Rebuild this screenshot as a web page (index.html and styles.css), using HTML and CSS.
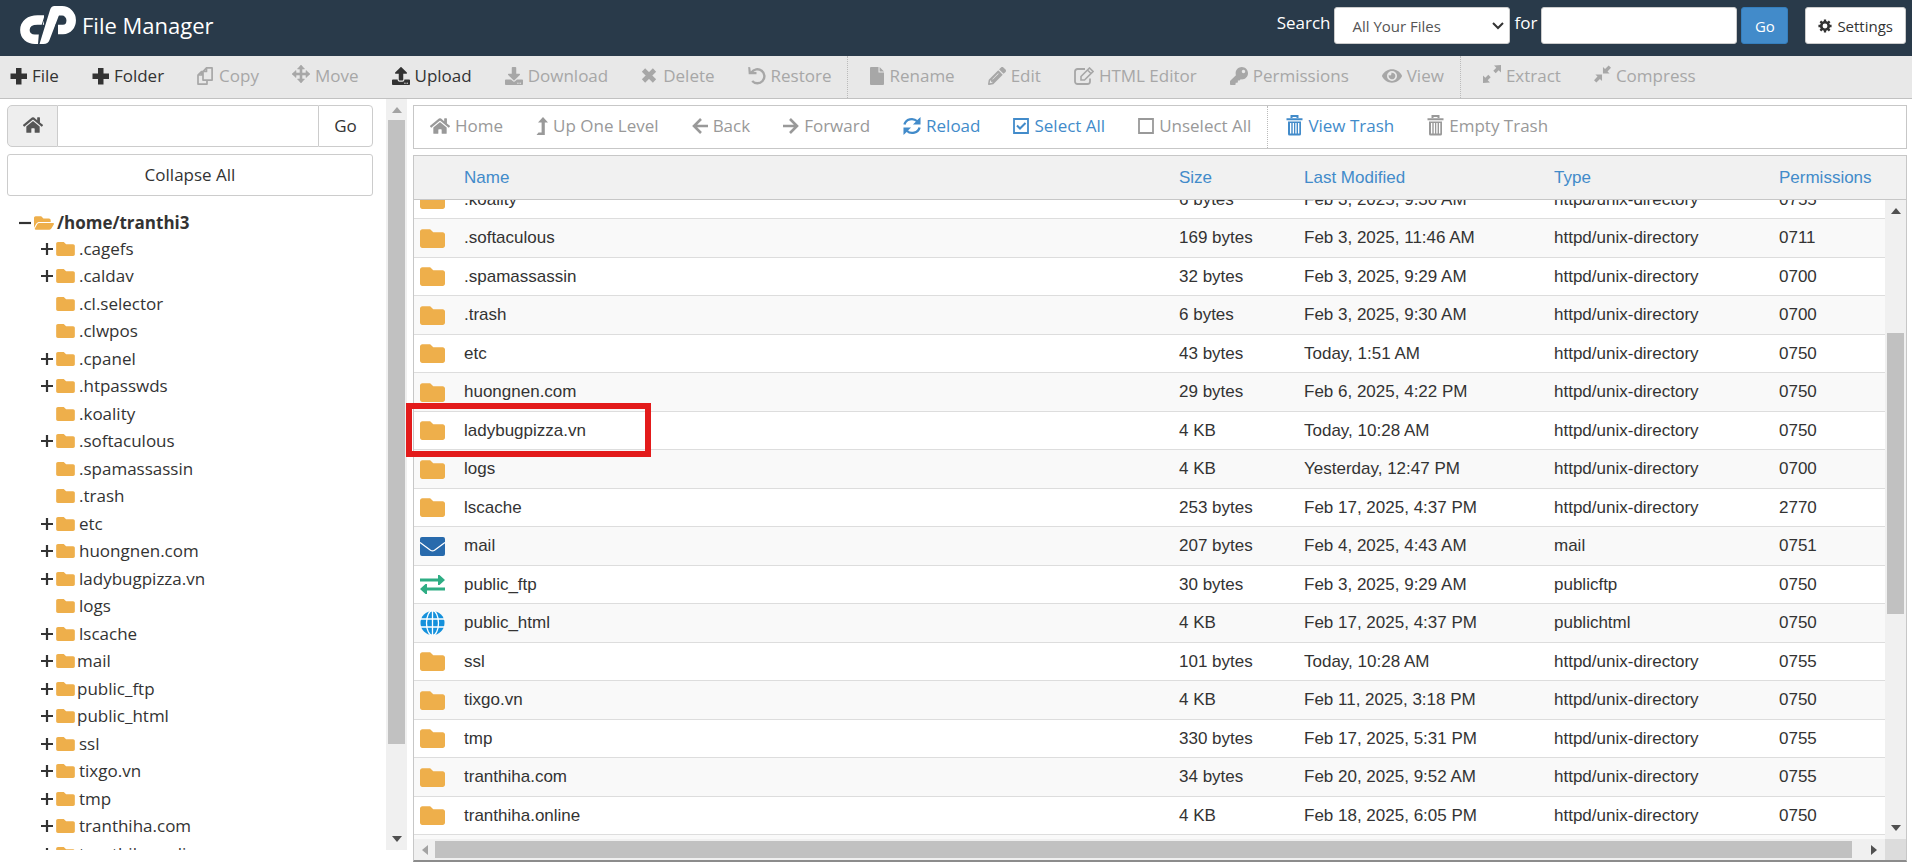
FILE: index.html
```html
<!DOCTYPE html>
<html lang="en">
<head>
<meta charset="utf-8">
<title>File Manager</title>
<link rel="stylesheet" href="styles.css">
</head>
<body>
<svg class="sprite" aria-hidden="true">
  <symbol id="plus" viewBox="0 0 17 17"><path d="M6 .5h5.500v5.500H17v5.500h-5.500V17H6v-5.500H.5V6H6z"/></symbol>
  <symbol id="copy" viewBox="0 0 17 18"><g fill="none" stroke="currentColor" stroke-width="1.700" stroke-linejoin="round"><path d="M9.500.9H15.100V13.100H6V4.500zM9.500 1V4.500H6M6 4.500H4.500L1 8V17.100H10V13.500M4.500 4.500V8H1"/></g></symbol>
  <symbol id="move" viewBox="0 0 18 18"><path d="M9 0l3.500 4H10v4h4V5.500L18 9l-4 3.500V10h-4v4h2.500L9 18l-3.500-4H8v-4H4v2.500L0 9l4-3.500V8h4V4H5.500z" stroke="currentColor" stroke-width=".6"/></symbol>
  <symbol id="upload" viewBox="0 0 512 512"><path d="M296 384h-80c-13.300 0-24-10.700-24-24V192h-87.700c-17.800 0-26.700-21.500-14.100-34.100L242.300 5.700c7.500-7.500 19.800-7.500 27.300 0l152.200 152.200c12.600 12.600 3.700 34.100-14.100 34.100H320v168c0 13.300-10.700 24-24 24zm216-8v112c0 13.300-10.700 24-24 24H24c-13.300 0-24-10.700-24-24V376c0-13.300 10.700-24 24-24h136v8c0 30.900 25.100 56 56 56h80c30.900 0 56-25.100 56-56v-8h136c13.300 0 24 10.700 24 24zm-124 88c0-11-9-20-20-20s-20 9-20 20 9 20 20 20 20-9 20-20zm64 0c0-11-9-20-20-20s-20 9-20 20 9 20 20 20 20-9 20-20z"/></symbol>
  <symbol id="download" viewBox="0 0 512 512"><path d="M216 0h80c13.300 0 24 10.700 24 24v168h87.700c17.800 0 26.700 21.500 14.100 34.100L269.700 378.300c-7.500 7.500-19.800 7.500-27.300 0L90.100 226.100c-12.600-12.600-3.700-34.100 14.100-34.100H192V24c0-13.300 10.700-24 24-24zm296 376v112c0 13.300-10.700 24-24 24H24c-13.300 0-24-10.700-24-24V376c0-13.300 10.700-24 24-24h146.700l49 49c20.100 20.100 52.500 20.100 72.600 0l49-49H488c13.300 0 24 10.700 24 24zm-124 88c0-11-9-20-20-20s-20 9-20 20 9 20 20 20 20-9 20-20zm64 0c0-11-9-20-20-20s-20 9-20 20 9 20 20 20 20-9 20-20z"/></symbol>
  <symbol id="times" viewBox="0 0 17 17"><path d="M2.500 2.500l11 11M13.500 2.500L2.500 13.500" stroke="currentColor" stroke-width="4.600"/></symbol>
  <symbol id="undo" viewBox="0 0 18 18"><path d="M3.500 5.500A7 7 0 1 1 4.200 14" fill="none" stroke="currentColor" stroke-width="2.400"/><path d="M.2 0l2 .3.6 4.200 5.700.5v2.300H.7z"/></symbol>
  <symbol id="file" viewBox="0 0 14 18"><path d="M1 0h7.500v5.500H14V17a1 1 0 0 1-1 1H1a1 1 0 0 1-1-1V1a1 1 0 0 1 1-1zM9.600 0L14 4.400H9.600z"/></symbol>
  <symbol id="pencil" viewBox="0 0 512 512"><path fill-rule="evenodd" d="M497.900 142.100l-46.100 46.100c-4.700 4.700-12.300 4.700-17 0l-111-111c-4.700-4.700-4.700-12.300 0-17l46.100-46.100c18.700-18.700 49.100-18.700 67.900 0l60.100 60.100c18.800 18.700 18.800 49.100 0 67.900zM284.200 99.800L21.600 362.400.4 483.900c-2.900 16.400 11.400 30.600 27.800 27.800l121.500-21.300 262.600-262.600c4.700-4.700 4.700-12.300 0-17l-111-111c-4.800-4.700-12.400-4.700-17.100 0zM88 424v-48l-28 14-12 70 70-12 14-28zM120 345l168-168 16 14-168 168z"/></symbol>
  <symbol id="editor" viewBox="0 0 20 18"><path d="M11 2H3.500A2.500 2.500 0 0 0 1 4.500v10A2.500 2.500 0 0 0 3.500 17h10a2.500 2.500 0 0 0 2.500-2.500V11.500" fill="none" stroke="currentColor" stroke-width="1.800"/><path d="M7 9.500L15.500 1l3.500 3.500-8.500 8.500H7zM13.500 3l3.500 3.500" fill="none" stroke="currentColor" stroke-width="1.600"/></symbol>
  <symbol id="key" viewBox="0 0 512 512"><path d="M512 176C512 273.200 433.200 352 336 352c-11.200 0-22.200-1-32.800-3l-24 27a24 24 0 0 1-18 8H224v40c0 13.300-10.700 24-24 24h-40v40c0 13.300-10.700 24-24 24H24c-13.300 0-24-10.700-24-24v-78c0-6.400 2.500-12.500 7-17l161.800-161.800C163.100 213.800 160 195.300 160 176 160 78.800 238.800 0 336 0c97.500 0 176 78.500 176 176zM336 128c0 26.500 21.500 48 48 48s48-21.500 48-48-21.500-48-48-48-48 21.500-48 48z"/></symbol>
  <symbol id="eye" viewBox="0 0 576 512"><path d="M572.500 241.400C518.300 135.600 410.900 64 288 64S57.700 135.600 3.500 241.400a32.400 32.400 0 0 0 0 29.200C57.700 376.400 165.100 448 288 448s230.300-71.600 284.500-177.400a32.400 32.400 0 0 0 0-29.200zM288 400a144 144 0 1 1 144-144 143.900 143.900 0 0 1-144 144zm0-240a95.300 95.300 0 0 0-25.300 3.800 47.900 47.900 0 0 1-66.900 66.900A95.800 95.800 0 1 0 288 160z"/></symbol>
  <symbol id="expand" viewBox="0 0 18 18"><path d="M18 0v7.500l-2.300-2.300-3 3-2.400-2.400 3-3L11 .5zM0 18v-7.500l2.300 2.300 3-3 2.400 2.400-3 3L7 17.500z"/></symbol>
  <symbol id="compress" viewBox="0 0 18 18"><path d="M9.500 8.500V1.500l2.200 2.200L15.500 0 18 2.500l-3.700 3.800 2.200 2.200zM8.500 9.500v7l-2.200-2.200L2.500 18 0 15.500l3.700-3.800-2.200-2.200z"/></symbol>
  <symbol id="home" viewBox="0 0 576 512"><path d="M280.400 148.300L96 300.100V464a16 16 0 0 0 16 16l112-.3a16 16 0 0 0 16-16V368a16 16 0 0 1 16-16h64a16 16 0 0 1 16 16v95.600a16 16 0 0 0 16 16L464 480a16 16 0 0 0 16-16V300L295.700 148.300a12.200 12.200 0 0 0-15.300 0zM571.600 251.500L488 182.600V44a12 12 0 0 0-12-12h-56a12 12 0 0 0-12 12v72.600L318.500 43a48 48 0 0 0-61 0L4.300 251.500a12 12 0 0 0-1.600 16.900l25.500 31A12 12 0 0 0 45.200 301l235.200-193.700a12.200 12.200 0 0 1 15.300 0L530.900 301a12 12 0 0 0 16.900-1.600l25.500-31a12 12 0 0 0-1.700-16.900z"/></symbol>
  <symbol id="up" viewBox="0 0 12 18"><path d="M7 0l5 5.500H8.800V18H.5l2-2.600H5.600V5.500H2z"/></symbol>
  <symbol id="back" viewBox="0 0 16 18"><path d="M9 2L2 9l7 7M2 9h14" fill="none" stroke="currentColor" stroke-width="2.600"/></symbol>
  <symbol id="forward" viewBox="0 0 16 18"><path d="M7 2l7 7-7 7M14 9H0" fill="none" stroke="currentColor" stroke-width="2.600"/></symbol>
  <symbol id="reload" viewBox="0 0 19 19"><path d="M1.500 8A8 7.500 0 0 1 15 4.500M17.500 11A8 7.500 0 0 1 4 14.500" fill="none" stroke="currentColor" stroke-width="2.500"/><path d="M18.500 0v8h-8l2.700-2.700 2.500-2.600zM.5 19v-8h8l-2.700 2.700-2.500 2.600z"/></symbol>
  <symbol id="checked" viewBox="0 0 16 18"><path d="M1 2h14v14H1z" fill="none" stroke="currentColor" stroke-width="1.800"/><path d="M4 8.500l3 3L12.500 6" fill="none" stroke="currentColor" stroke-width="2"/></symbol>
  <symbol id="box" viewBox="0 0 16 18"><path d="M1 2h14v14H1z" fill="none" stroke="currentColor" stroke-width="1.800"/></symbol>
  <symbol id="trash" viewBox="0 0 17 21"><path d="M5.500 3V1h6v2M.5 4.200h16" fill="none" stroke="currentColor" stroke-width="2"/><path fill-rule="evenodd" d="M2 6.500h13V19a1.500 1.500 0 0 1-1.500 1.500h-10A1.500 1.500 0 0 1 2 19zM4 8v10.500h1.300V8zm2.700 0v10.500H8V8zM9.300 8v10.500h1.300V8zM12 8v10.500h1.300V8z"/></symbol>
  <symbol id="cog" viewBox="0 0 16 16"><circle cx="8" cy="8" r="4.300" fill="none" stroke="currentColor" stroke-width="3"/><path d="M8 .5v3M8 12.500v3M.5 8h3M12.500 8h3M2.700 2.700l2 2M11.300 11.300l2 2M2.700 13.300l2-2M11.300 4.700l2-2" stroke="currentColor" stroke-width="2.600"/></symbol>
  <symbol id="folder" viewBox="0 64 512 384"><path d="M464 128H272l-64-64H48C21.500 64 0 85.500 0 112v288c0 26.500 21.500 48 48 48h416c26.500 0 48-21.500 48-48V176c0-26.500-21.500-48-48-48z"/></symbol>
  <symbol id="open" viewBox="0 64 576 384"><path d="M572.700 292.100L500.300 416.200A64 64 0 0 1 445 448H45c-18.500 0-30-20.100-20.700-36.100l72.400-124.200A64 64 0 0 1 152 256h400c18.500 0 30 20.100 20.700 36.100zM152 224h328v-48c0-26.500-21.500-48-48-48H272l-64-64H48C21.500 64 0 85.500 0 112v278l69-118.400C86.200 242.300 118 224 152 224z"/></symbol>
  <symbol id="mail" viewBox="0 0 25 19"><rect width="25" height="19" rx="2"/><path d="M0 5.500l10.500 7.700q2 1.300 4 0L25 5.500" fill="none" stroke="#fff" stroke-width="1.300"/></symbol>
  <symbol id="swap" viewBox="0 0 25 19"><path d="M0 3.500h18V0h1.500L25 5l-5.500 5H18V6.500H0zM25 12.500H7V9H5.500L0 14l5.500 5H7v-3.500h18z"/></symbol>
  <symbol id="globe" viewBox="0 0 24 24"><circle cx="12" cy="12" r="12"/><path d="M0 8h24M0 16h24M12 0v24" fill="none" stroke="#fff" stroke-width="1.300"/><ellipse cx="12" cy="12" rx="6" ry="12.500" fill="none" stroke="#fff" stroke-width="1.300"/></symbol>
  <symbol id="tri-up" viewBox="0 0 10 6"><path d="M5 0l5 6H0z"/></symbol>
  <symbol id="tri-down" viewBox="0 0 10 6"><path d="M5 6L0 0h10z"/></symbol>
  <symbol id="tri-left" viewBox="0 0 6 10"><path d="M0 5l6-5v10z"/></symbol>
  <symbol id="tri-right" viewBox="0 0 6 10"><path d="M6 5L0 0v10z"/></symbol>
  <symbol id="expander" viewBox="0 0 12 12"><path d="M6 0v12M0 6h12" stroke="currentColor" stroke-width="2.200"/></symbol>
  <symbol id="collapser" viewBox="0 0 12 12"><path d="M0 6h12" stroke="currentColor" stroke-width="2.200"/></symbol>
</svg>

<header class="header">
  <svg class="logo" viewBox="0 0 56 38" role="img" aria-label="cPanel"><g fill="none" stroke="#fff" stroke-width="9.500"><path d="M24 14H17.500C10 14 4.900 18 4.900 24s4.600 9.200 10 9.200H19"/><path d="M38 23.500h5c5 0 8.200-4.200 8.200-9.300S47 4.800 42 4.800H34"/></g><path d="M33.500 0h9L29.500 34q-1.300 4-6 4H19.500L30 4q1.200-4 4.500-4z" fill="#fff"/><path d="M25.500 8L19.300 28.500 18.500 38M33.500 28.500L36.500 17.500" fill="none" stroke="#293a4a" stroke-width="1"/></svg>
  <h1 class="title">File Manager</h1>
  <form class="search">
    <label for="scope">Search</label>
    <span class="scope-wrap"><select id="scope" class="control scope"><option>All Your Files</option></select><svg class="chevron" viewBox="0 0 12 8"><path d="M1 1l5 5 5-5" fill="none" stroke="#333" stroke-width="2"/></svg></span>
    <label for="query">for</label>
    <input id="query" class="control query" type="text">
    <button class="control go" type="button">Go</button>
    <button class="control settings" type="button"><svg class="i14"><use href="#cog"/></svg>Settings</button>
  </form>
</header>

<nav class="toolbar" aria-label="Actions">
  <button class="tool on"><svg class="i17"><use href="#plus"/></svg>File</button>
  <button class="tool on"><svg class="i17"><use href="#plus"/></svg>Folder</button>
  <button class="tool"><svg class="i17"><use href="#copy"/></svg>Copy</button>
  <button class="tool"><svg class="i18 raised"><use href="#move"/></svg>Move</button>
  <button class="tool on"><svg class="i18"><use href="#upload"/></svg>Upload</button>
  <button class="tool"><svg class="i18"><use href="#download"/></svg>Download</button>
  <button class="tool"><svg class="i17"><use href="#times"/></svg>Delete</button>
  <button class="tool"><svg class="i18"><use href="#undo"/></svg>Restore</button>
  <span class="sep"></span>
  <button class="tool"><svg class="i14"><use href="#file"/></svg>Rename</button>
  <button class="tool"><svg class="i18"><use href="#pencil"/></svg>Edit</button>
  <button class="tool"><svg class="i20"><use href="#editor"/></svg>HTML Editor</button>
  <button class="tool"><svg class="i18"><use href="#key"/></svg>Permissions</button>
  <button class="tool"><svg class="i20"><use href="#eye"/></svg>View</button>
  <span class="sep"></span>
  <button class="tool"><svg class="i18 raised"><use href="#expand"/></svg>Extract</button>
  <button class="tool"><svg class="i17 raised"><use href="#compress"/></svg>Compress</button>
</nav>

<div class="workspace">
  <aside class="sidebar">
    <div class="side-content">
      <form class="path">
        <button class="path-home" type="button" aria-label="Home"><svg class="i20"><use href="#home"/></svg></button>
        <input class="path-input" type="text" aria-label="Path">
        <button class="path-go" type="button">Go</button>
      </form>
      <button class="collapse" type="button">Collapse All</button>
      <div class="root"><svg class="i12"><use href="#collapser"/></svg><svg class="f-open"><use href="#open"/></svg>/home/tranthi3</div>
      <ul class="tree">
        <li><svg class="i12"><use href="#expander"/></svg><svg class="f-small"><use href="#folder"/></svg>.cagefs</li>
        <li><svg class="i12"><use href="#expander"/></svg><svg class="f-small"><use href="#folder"/></svg>.caldav</li>
        <li class="leaf"><svg class="f-small"><use href="#folder"/></svg>.cl.selector</li>
        <li class="leaf"><svg class="f-small"><use href="#folder"/></svg>.clwpos</li>
        <li><svg class="i12"><use href="#expander"/></svg><svg class="f-small"><use href="#folder"/></svg>.cpanel</li>
        <li><svg class="i12"><use href="#expander"/></svg><svg class="f-small"><use href="#folder"/></svg>.htpasswds</li>
        <li class="leaf"><svg class="f-small"><use href="#folder"/></svg>.koality</li>
        <li><svg class="i12"><use href="#expander"/></svg><svg class="f-small"><use href="#folder"/></svg>.softaculous</li>
        <li class="leaf"><svg class="f-small"><use href="#folder"/></svg>.spamassassin</li>
        <li class="leaf"><svg class="f-small"><use href="#folder"/></svg>.trash</li>
        <li><svg class="i12"><use href="#expander"/></svg><svg class="f-small"><use href="#folder"/></svg>etc</li>
        <li><svg class="i12"><use href="#expander"/></svg><svg class="f-small"><use href="#folder"/></svg>huongnen.com</li>
        <li><svg class="i12"><use href="#expander"/></svg><svg class="f-small"><use href="#folder"/></svg>ladybugpizza.vn</li>
        <li class="leaf"><svg class="f-small"><use href="#folder"/></svg>logs</li>
        <li><svg class="i12"><use href="#expander"/></svg><svg class="f-small"><use href="#folder"/></svg>lscache</li>
        <li class="special"><svg class="i12"><use href="#expander"/></svg><svg class="f-small"><use href="#folder"/></svg>mail</li>
        <li class="special"><svg class="i12"><use href="#expander"/></svg><svg class="f-small"><use href="#folder"/></svg>public_ftp</li>
        <li class="special"><svg class="i12"><use href="#expander"/></svg><svg class="f-small"><use href="#folder"/></svg>public_html</li>
        <li><svg class="i12"><use href="#expander"/></svg><svg class="f-small"><use href="#folder"/></svg>ssl</li>
        <li><svg class="i12"><use href="#expander"/></svg><svg class="f-small"><use href="#folder"/></svg>tixgo.vn</li>
        <li><svg class="i12"><use href="#expander"/></svg><svg class="f-small"><use href="#folder"/></svg>tmp</li>
        <li><svg class="i12"><use href="#expander"/></svg><svg class="f-small"><use href="#folder"/></svg>tranthiha.com</li>
        <li><svg class="i12"><use href="#expander"/></svg><svg class="f-small"><use href="#folder"/></svg>tranthiha.online</li>
      </ul>
    </div>
    <div class="vbar side-bar">
      <svg class="arrow-v dim"><use href="#tri-up"/></svg>
      <div class="vtrack"><div class="vthumb side-thumb"></div></div>
      <svg class="arrow-v"><use href="#tri-down"/></svg>
    </div>
  </aside>

  <main class="main">
    <nav class="navbar" aria-label="Navigation">
      <button class="nav"><svg class="i20"><use href="#home"/></svg>Home</button>
      <button class="nav"><svg class="i12 tall"><use href="#up"/></svg>Up One Level</button>
      <button class="nav"><svg class="i16"><use href="#back"/></svg>Back</button>
      <button class="nav"><svg class="i16"><use href="#forward"/></svg>Forward</button>
      <button class="nav blue"><svg class="i18"><use href="#reload"/></svg>Reload</button>
      <button class="nav blue"><svg class="i16"><use href="#checked"/></svg>Select All</button>
      <button class="nav"><svg class="i16"><use href="#box"/></svg>Unselect All</button>
      <span class="sep"></span>
      <button class="nav blue first"><svg class="bin"><use href="#trash"/></svg>View Trash</button>
      <button class="nav"><svg class="bin"><use href="#trash"/></svg>Empty Trash</button>
    </nav>

    <section class="listing">
      <table class="files head">
        <colgroup><col class="c-icon"><col><col class="c-size"><col class="c-date"><col class="c-type"><col class="c-perm-head"></colgroup>
        <thead><tr><th></th><th>Name</th><th>Size</th><th>Last Modified</th><th>Type</th><th>Permissions</th></tr></thead>
      </table>
      <div class="list-area">
        <div class="rows">
          <table class="files body">
            <colgroup><col class="c-icon"><col><col class="c-size"><col class="c-date"><col class="c-type"><col class="c-perm"></colgroup>
            <tbody>
              <tr><td><svg class="f-big"><use href="#folder"/></svg></td><td>.koality</td><td>6 bytes</td><td>Feb 3, 2025, 9:30 AM</td><td>httpd/unix-directory</td><td>0755</td></tr>
              <tr><td><svg class="f-big"><use href="#folder"/></svg></td><td>.softaculous</td><td>169 bytes</td><td>Feb 3, 2025, 11:46 AM</td><td>httpd/unix-directory</td><td>0711</td></tr>
              <tr><td><svg class="f-big"><use href="#folder"/></svg></td><td>.spamassassin</td><td>32 bytes</td><td>Feb 3, 2025, 9:29 AM</td><td>httpd/unix-directory</td><td>0700</td></tr>
              <tr><td><svg class="f-big"><use href="#folder"/></svg></td><td>.trash</td><td>6 bytes</td><td>Feb 3, 2025, 9:30 AM</td><td>httpd/unix-directory</td><td>0700</td></tr>
              <tr><td><svg class="f-big"><use href="#folder"/></svg></td><td>etc</td><td>43 bytes</td><td>Today, 1:51 AM</td><td>httpd/unix-directory</td><td>0750</td></tr>
              <tr><td><svg class="f-big"><use href="#folder"/></svg></td><td>huongnen.com</td><td>29 bytes</td><td>Feb 6, 2025, 4:22 PM</td><td>httpd/unix-directory</td><td>0750</td></tr>
              <tr><td><svg class="f-big"><use href="#folder"/></svg></td><td>ladybugpizza.vn</td><td>4 KB</td><td>Today, 10:28 AM</td><td>httpd/unix-directory</td><td>0750</td></tr>
              <tr><td><svg class="f-big"><use href="#folder"/></svg></td><td>logs</td><td>4 KB</td><td>Yesterday, 12:47 PM</td><td>httpd/unix-directory</td><td>0700</td></tr>
              <tr><td><svg class="f-big"><use href="#folder"/></svg></td><td>lscache</td><td>253 bytes</td><td>Feb 17, 2025, 4:37 PM</td><td>httpd/unix-directory</td><td>2770</td></tr>
              <tr><td><svg class="f-big mail"><use href="#mail"/></svg></td><td>mail</td><td>207 bytes</td><td>Feb 4, 2025, 4:43 AM</td><td>mail</td><td>0751</td></tr>
              <tr><td><svg class="f-big ftp"><use href="#swap"/></svg></td><td>public_ftp</td><td>30 bytes</td><td>Feb 3, 2025, 9:29 AM</td><td>publicftp</td><td>0750</td></tr>
              <tr><td><svg class="f-big web"><use href="#globe"/></svg></td><td>public_html</td><td>4 KB</td><td>Feb 17, 2025, 4:37 PM</td><td>publichtml</td><td>0750</td></tr>
              <tr><td><svg class="f-big"><use href="#folder"/></svg></td><td>ssl</td><td>101 bytes</td><td>Today, 10:28 AM</td><td>httpd/unix-directory</td><td>0755</td></tr>
              <tr><td><svg class="f-big"><use href="#folder"/></svg></td><td>tixgo.vn</td><td>4 KB</td><td>Feb 11, 2025, 3:18 PM</td><td>httpd/unix-directory</td><td>0750</td></tr>
              <tr><td><svg class="f-big"><use href="#folder"/></svg></td><td>tmp</td><td>330 bytes</td><td>Feb 17, 2025, 5:31 PM</td><td>httpd/unix-directory</td><td>0755</td></tr>
              <tr><td><svg class="f-big"><use href="#folder"/></svg></td><td>tranthiha.com</td><td>34 bytes</td><td>Feb 20, 2025, 9:52 AM</td><td>httpd/unix-directory</td><td>0755</td></tr>
              <tr><td><svg class="f-big"><use href="#folder"/></svg></td><td>tranthiha.online</td><td>4 KB</td><td>Feb 18, 2025, 6:05 PM</td><td>httpd/unix-directory</td><td>0750</td></tr>
            </tbody>
          </table>
        </div>
        <div class="vbar">
          <svg class="arrow-v"><use href="#tri-up"/></svg>
          <div class="vtrack"><div class="vthumb list-thumb"></div></div>
          <svg class="arrow-v"><use href="#tri-down"/></svg>
        </div>
      </div>
      <div class="hrow">
        <div class="hbar">
          <svg class="arrow-h dim"><use href="#tri-left"/></svg>
          <div class="hthumb"></div>
          <svg class="arrow-h"><use href="#tri-right"/></svg>
        </div>
        <div class="corner"></div>
      </div>
    </section>
    <div class="highlight"></div>
  </main>
</div>
</body>
</html>
```
FILE: styles.css
```css
* { box-sizing: border-box; }

body {
  margin: 0;
  height: 100vh;
  display: flex;
  flex-direction: column;
  overflow: hidden;
  background: #fff;
  color: #333;
  font: 17px/24px "Open Sans", "Noto Sans", sans-serif;
}

.sprite { display: none; }

svg { fill: currentColor; flex: none; }

button, input, select { font: inherit; color: inherit; margin: 0; }

button { white-space: nowrap; cursor: pointer; }

.i12 { width: 12px; height: 12px; }
.i12.tall { height: 18px; }
.i14 { width: 14px; height: 18px; }
.i16 { width: 16px; height: 18px; }
.i17 { width: 17px; height: 18px; }
.i18 { width: 18px; height: 18px; }
.i20 { width: 20px; height: 18px; }
.bin { width: 17px; height: 21px; margin-bottom: 2px; }
.raised { margin-bottom: 4px; }

/* Header */
.header {
  flex: none;
  display: flex;
  align-items: flex-start;
  height: 56px;
  padding: 6px 6px 0 20px;
  background: #293a4a;
  color: #fff;
}
.logo { width: 56px; height: 38px; }
.title { margin: 4px 0 0 6px; font-size: 22px; line-height: 30px; font-weight: 400; }
.search { display: flex; margin: 1px 0 0 auto; gap: 4px; line-height: 32px; }
.control {
  height: 37px;
  border: 1px solid #ccc;
  border-radius: 3px;
  background: #fff;
  color: #333;
  font-size: 15px;
}
.scope-wrap { position: relative; display: flex; }
.scope { width: 176px; padding: 0 17px; appearance: none; color: #555; }
.chevron { position: absolute; right: 6px; top: 15px; width: 12px; height: 8px; }
.query { width: 196px; }
.go { width: 47px; padding: 0; background: #428bca; border-color: #357ebd; color: #fff; }
.settings {
  display: flex;
  align-items: center;
  gap: 5px;
  margin-left: 13px;
  padding: 0 12px;
}

/* Action toolbar */
.toolbar {
  flex: none;
  display: flex;
  height: 43px;
  padding-left: 10px;
  background: #e8e8e8;
  border-bottom: 1px solid #c1c1c1;
}
.tool, .nav {
  display: flex;
  align-items: center;
  gap: 5px;
  padding: 0 0 2px;
  margin-right: 33px;
  border: 0;
  background: none;
  color: #a7a7a7;
}
.tool.on { color: #333; }
.sep { width: 1px; margin: 0 22px 0 -17px; border-left: 1px dotted #bbb; }

/* Workspace */
.workspace { flex: 1; display: flex; min-height: 0; }

.sidebar { flex: none; display: flex; width: 407px; margin-bottom: 12px; overflow: hidden; }
.side-content { flex: 1; padding: 6px 13px 0 7px; }
.path { display: flex; height: 42px; }
.path-home, .path-input, .path-go { border: 1px solid #ccc; background: #fff; }
.path-home {
  width: 51px;
  display: flex;
  align-items: center;
  justify-content: center;
  padding: 0 0 2px;
  background: #eee;
  color: #555;
  border-radius: 5px 0 0 5px;
}
.path-input { flex: 1; min-width: 0; border-width: 1px 0; }
.path-go { width: 55px; padding: 0; border-left-color: #ccc; border-radius: 0 4px 4px 0; }
.collapse {
  width: 100%;
  height: 42px;
  margin: 7px 0 14px;
  padding: 0;
  border: 1px solid #ccc;
  border-radius: 3px;
  background: #fff;
}
.root { display: flex; align-items: center; height: 25px; padding-left: 12px; font-weight: 700; }
.f-open { width: 20px; height: 14px; margin: 0 3px; color: #eeaf4b; }
.tree { list-style: none; margin: 0; padding: 0 0 0 34px; }
.tree li { display: flex; align-items: center; height: 27px; }
.tree li:nth-child(even) { height: 28px; }
.tree .leaf { padding-left: 12px; }
.f-small { width: 19px; height: 14px; margin: 0 4px 0 3px; color: #eeaf4b; }
.special .f-small { margin-right: 2px; }

/* Scroll bars */
.vbar {
  flex: none;
  display: flex;
  flex-direction: column;
  align-items: center;
  width: 21px;
  padding: 8px 0;
  background: #f0f0f0;
  color: #505050;
}
.arrow-v { width: 10px; height: 6px; }
.dim { color: #a3a3a3; }
.vtrack { flex: 1; width: 17px; margin: 7px 0; }
.vthumb { background: #c1c1c1; }
.side-thumb { height: 88%; }
.list-thumb { height: 47%; margin-top: 112px; }

/* Listing */
.main {
  position: relative;
  flex: 1;
  min-width: 0;
  display: flex;
  flex-direction: column;
  margin: 6px 5px 0 6px;
}
.navbar { flex: none; display: flex; height: 44px; padding-left: 16px; border: 1px solid #c7c7c7; }
.nav { color: #999; }
.nav.blue { color: #428bca; }
.nav.first { margin-left: -4px; }

.listing {
  flex: 1;
  min-height: 0;
  display: flex;
  flex-direction: column;
  margin-top: 6px;
  border: 1px solid #c7c7c7;
  border-bottom: 2px solid #8c8c8c;
  font-family: "Liberation Sans", Arial, sans-serif;
}
.files { width: 100%; table-layout: fixed; border-collapse: separate; border-spacing: 0; }
.files th, .files td { padding: 0 0 0 8px; text-align: left; white-space: nowrap; }
.files td:first-child { padding-left: 6px; }
.c-icon { width: 42px; }
.c-size { width: 125px; }
.c-date { width: 250px; }
.c-type { width: 225px; }
.c-perm { width: 114px; }
.c-perm-head { width: 135px; }
.head th {
  height: 44px;
  background: #f1f1f1;
  border-bottom: 1px solid #c7c7c7;
  color: #428bca;
  font-weight: 400;
}
.list-area { flex: 1; min-height: 0; display: flex; }
.rows { flex: 1; min-width: 0; overflow: hidden; background: #f9f9f9; }
.body { margin-top: -19px; }
.body td { height: 38px; background: #fff; border-bottom: 1px solid #ddd; }
.body tr:nth-child(even) td { height: 39px; background: #f9f9f9; }
.f-big { display: block; width: 25px; height: 19px; color: #eeaf4b; }
.f-big.mail { color: #286aac; }
.f-big.ftp { color: #2ead84; }
.f-big.web { height: 24px; color: #1591dc; }

.hrow { flex: none; display: flex; height: 21px; }
.hbar {
  flex: 1;
  display: flex;
  align-items: center;
  padding: 0 8px;
  background: #f0f0f0;
  color: #505050;
}
.arrow-h { width: 6px; height: 10px; }
.hthumb { flex: 1; height: 17px; margin: 0 19px 0 7px; background: #c1c1c1; }
.corner { width: 21px; background: #dcdcdc; }

.highlight {
  position: absolute;
  left: -7px;
  top: 298px;
  width: 245px;
  height: 54px;
  border: 6px solid #e31b1b;
  pointer-events: none;
}
```
